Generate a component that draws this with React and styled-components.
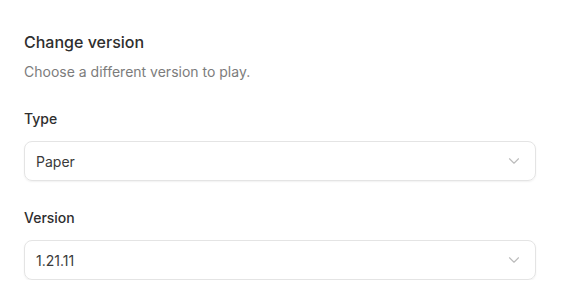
import React from "react";
import styled, { createGlobalStyle } from "styled-components";

const Global = createGlobalStyle`
  html, body { margin: 0; padding: 0; background: #fff; }
  body { font-family: Inter, "Noto Sans", sans-serif; -webkit-font-smoothing: antialiased; }
`;

const Panel = styled.div`
  padding: 32px 30px 0 24px;
  display: flex;
  flex-direction: column;
`;

const Title = styled.h2`
  margin: 0;
  font-size: 16px;
  line-height: 20px;
  font-weight: 500;
  color: #2e2e2e;
`;

const Subtitle = styled.p`
  margin: 10px 0 0;
  font-size: 14px;
  line-height: 20px;
  font-weight: 400;
  color: #7c7c7c;
`;

const Fields = styled.div`
  margin-top: 27px;
  display: flex;
  flex-direction: column;
  gap: 27px;
`;

const Field = styled.div`
  display: flex;
  flex-direction: column;
  gap: 12px;
`;

const Label = styled.label`
  font-size: 14px;
  line-height: 20px;
  font-weight: 500;
  color: #2e2e2e;
`;

const SelectBox = styled.div`
  box-sizing: border-box;
  height: 40px;
  border: 1px solid #e4e4e4;
  border-radius: 8px;
  box-shadow: 0 1px 2px rgba(0, 0, 0, 0.06);
  display: flex;
  align-items: center;
  justify-content: space-between;
  padding: 0 12px 0 11px;
  font-size: 14px;
  font-weight: 400;
  color: #3a3a3a;
`;

const Chevron = () => (
  <svg width="18" height="18" viewBox="0 0 24 24" fill="none" stroke="#bcbcbc" strokeWidth="1.5" strokeLinecap="round" strokeLinejoin="round">
    <path d="m6 9 6 6 6-6" />
  </svg>
);

const Select = ({ label, value }) => (
  <Field>
    <Label>{label}</Label>
    <SelectBox>
      <span>{value}</span>
      <Chevron />
    </SelectBox>
  </Field>
);

export default function App() {
  return (
    <>
      <Global />
      <Panel>
        <Title>Change version</Title>
        <Subtitle>Choose a different version to play.</Subtitle>
        <Fields>
          <Select label="Type" value="Paper" />
          <Select label="Version" value="1.21.11" />
        </Fields>
      </Panel>
    </>
  );
}
